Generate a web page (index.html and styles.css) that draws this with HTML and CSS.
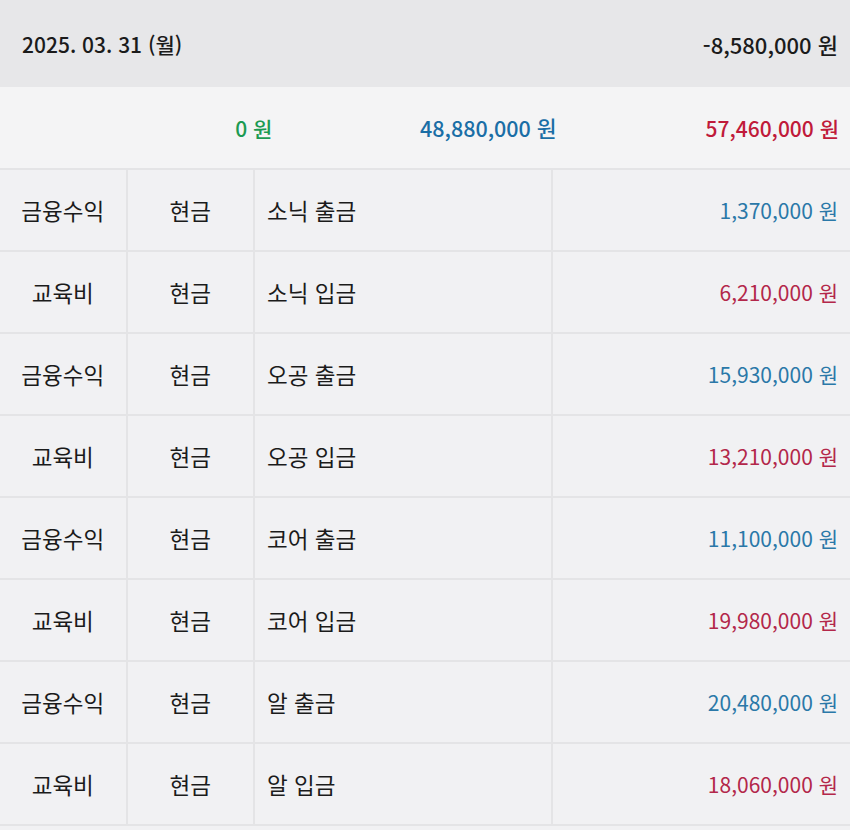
FILE: index.html
```html
<!DOCTYPE html>
<html lang="ko">
<head>
<meta charset="utf-8">
<title>2025. 03. 31</title>
<link rel="stylesheet" href="styles.css">
</head>
<body>
<div class="day">
  <div class="day-head">
    <span class="date">2025. 03. 31 (월)</span>
    <span class="total">-8,580,000 원</span>
  </div>
  <div class="summary">
    <span class="sum green">0 원</span>
    <span class="sum blue">48,880,000 원</span>
    <span class="sum red">57,460,000 원</span>
  </div>
  <div class="rows">
    <div class="row"><div class="cell c">금융수익</div><div class="cell c">현금</div><div class="cell l">소닉 출금</div><div class="cell r out">1,370,000 원</div></div>
    <div class="row"><div class="cell c">교육비</div><div class="cell c">현금</div><div class="cell l">소닉 입금</div><div class="cell r in">6,210,000 원</div></div>
    <div class="row"><div class="cell c">금융수익</div><div class="cell c">현금</div><div class="cell l">오공 출금</div><div class="cell r out">15,930,000 원</div></div>
    <div class="row"><div class="cell c">교육비</div><div class="cell c">현금</div><div class="cell l">오공 입금</div><div class="cell r in">13,210,000 원</div></div>
    <div class="row"><div class="cell c">금융수익</div><div class="cell c">현금</div><div class="cell l">코어 출금</div><div class="cell r out">11,100,000 원</div></div>
    <div class="row"><div class="cell c">교육비</div><div class="cell c">현금</div><div class="cell l">코어 입금</div><div class="cell r in">19,980,000 원</div></div>
    <div class="row"><div class="cell c">금융수익</div><div class="cell c">현금</div><div class="cell l">알 출금</div><div class="cell r out">20,480,000 원</div></div>
    <div class="row"><div class="cell c">교육비</div><div class="cell c">현금</div><div class="cell l">알 입금</div><div class="cell r in">18,060,000 원</div></div>
  </div>
</div>
</body>
</html>
```
FILE: styles.css
```css
html, body {
  margin: 0;
  padding: 0;
  background: #f1f1f3;
}
body {
  font-family: "Noto Sans CJK KR", "Noto Sans", sans-serif;
  color: #1b1b1b;
}
.day-head {
  height: 87px;
  box-sizing: border-box;
  background: #e7e7e9;
  display: flex;
  align-items: center;
  justify-content: space-between;
  padding: 0 12px 0 22px;
  font-size: 21px;
  font-weight: 500;
}
.total {
  font-size: 22px;
}
.summary {
  height: 81px;
  background: #f4f4f5;
  display: grid;
  grid-template-columns: 1fr 1fr 1fr;
  align-items: center;
  font-size: 21px;
  font-weight: 500;
}
.sum {
  text-align: right;
  padding-right: 11px;
}
.sum.blue {
  font-size: 21.5px;
  padding-right: 10px;
}
.green { color: #1c9a52; }
.blue { color: #1a6ea6; }
.red { color: #c01a3a; }
.rows {
  border-top: 2px solid #e4e4e6;
}
.row {
  display: grid;
  grid-template-columns: 15% 15% 35% 35%;
  height: 82px;
  box-sizing: border-box;
  border-bottom: 2px solid #e4e4e6;
}
.cell {
  display: flex;
  align-items: center;
  font-size: 22.5px;
  border-right: 2px solid #e4e4e6;
}
.cell:last-child {
  border-right: none;
}
.c { justify-content: center; }
.l { justify-content: flex-start; padding-left: 12px; }
.r { justify-content: flex-end; padding-right: 12px; font-size: 21px; }
.out { color: #2a78a8; }
.in { color: #b3274a; }
```
